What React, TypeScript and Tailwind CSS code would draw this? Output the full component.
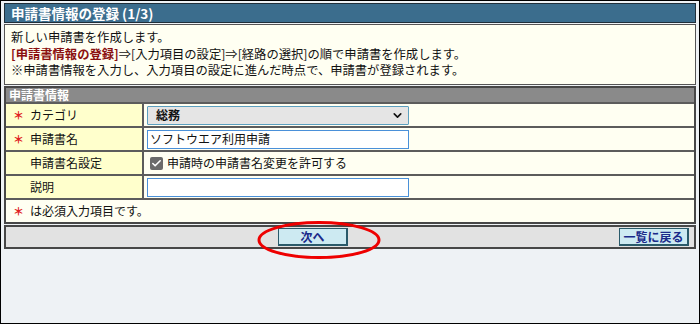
import { ChevronDown, Check } from "lucide-react";

const font = { fontFamily: '"Noto Sans CJK JP", "Noto Sans", sans-serif' };

function Req() {
  return <span className="inline-block w-[15px] text-[#e02020] font-bold text-[11px]">＊</span>;
}

function Row(props: { label: string; required?: boolean; children?: React.ReactNode }) {
  return (
    <div className="flex h-[24px] border-b-2 border-[#5c5c5c]">
      <div className="w-[138px] shrink-0 bg-[#ffffcc] border-r-2 border-[#5c5c5c] flex items-center pl-[7px]">
        {props.required ? <Req /> : <span className="inline-block w-[15px]" />}
        <span className="ml-[2px]">{props.label}</span>
      </div>
      <div className="flex-1 bg-[#fffff2] flex items-center pl-[3px]">{props.children}</div>
    </div>
  );
}

export default function App() {
  return (
    <div
      className="relative w-[700px] h-[324px] border border-black bg-[#eef2f5] px-[3px] pt-[2px] text-[12px] text-[#111]"
      style={font}
    >
      <div className="h-[20px] bg-[#3b6d8d] border border-[#1f2f3a] flex items-center pl-[6px] text-white font-bold text-[13.5px]">
        申請書情報の登録 (1/3)
      </div>

      <div className="mt-[1px] h-[61px] bg-[#fffff2] border border-[#555] px-[6px] pt-[4px] leading-[16.5px] text-[12.3px]">
        <div>新しい申請書を作成します。</div>
        <div>
          <span className="font-bold text-[#8b1010]">[申請書情報の登録]</span>
          ⇒[入力項目の設定]⇒[経路の選択]の順で申請書を作成します。
        </div>
        <div>※申請書情報を入力し、入力項目の設定に進んだ時点で、申請書が登録されます。</div>
      </div>

      <div className="mt-[1px] border-2 border-[#474747]">
        <div className="h-[16px] bg-[#8a8a8a] text-white font-bold flex items-center pl-[3px] border-b-2 border-[#5c5c5c]">
          申請書情報
        </div>
        <Row label="カテゴリ" required>
          <div className="w-[262px] h-[19px] bg-[#e5e5e5] border border-[#5b9fbf] rounded-[1px] flex items-center justify-between pl-[8px] pr-[4px]">
            <span className="font-bold">総務</span>
            <ChevronDown size={13} strokeWidth={3} />
          </div>
        </Row>
        <Row label="申請書名" required>
          <div className="w-[262px] h-[19px] bg-white border border-[#4a90d9] flex items-center pl-[2px]">
            ソフトウエア利用申請
          </div>
        </Row>
        <Row label="申請書名設定">
          <div className="flex items-center ml-[3px]">
            <span className="w-[13px] h-[13px] bg-[#6b6b6b] rounded-[2px] flex items-center justify-center">
              <Check size={11} strokeWidth={3.5} className="text-white" />
            </span>
            <span className="ml-[4px]">申請時の申請書名変更を許可する</span>
          </div>
        </Row>
        <Row label="説明">
          <div className="w-[262px] h-[19px] bg-white border border-[#4a90d9]" />
        </Row>
        <div className="h-[22px] bg-[#fffff2] flex items-center pl-[7px]">
          <Req />
          <span className="ml-[2px]">は必須入力項目です。</span>
        </div>
      </div>

      <div className="mt-[1px] h-[24px] bg-[#e2e2e2] border-2 border-[#474747] flex items-center">
        <button className="ml-[272px] w-[70px] h-[18px] bg-[#cdeaf2] border border-[#2a5a6a] border-r-2 border-b-2 text-[#1a2a8a] font-bold text-[12px] flex items-center justify-center">
          次へ
        </button>
        <button className="ml-auto mr-[5px] w-[70px] h-[18px] bg-[#cdeaf2] border border-[#2a5a6a] border-r-2 border-b-2 text-[#1a2a8a] font-bold text-[12px] flex items-center justify-center">
          一覧に戻る
        </button>
      </div>

      <svg className="absolute left-[255px] top-[219px] pointer-events-none" width="126" height="40" viewBox="0 0 126 40">
        <ellipse cx="63" cy="20" rx="60" ry="17.5" fill="none" stroke="#ee0000" strokeWidth="3" />
      </svg>
    </div>
  );
}
